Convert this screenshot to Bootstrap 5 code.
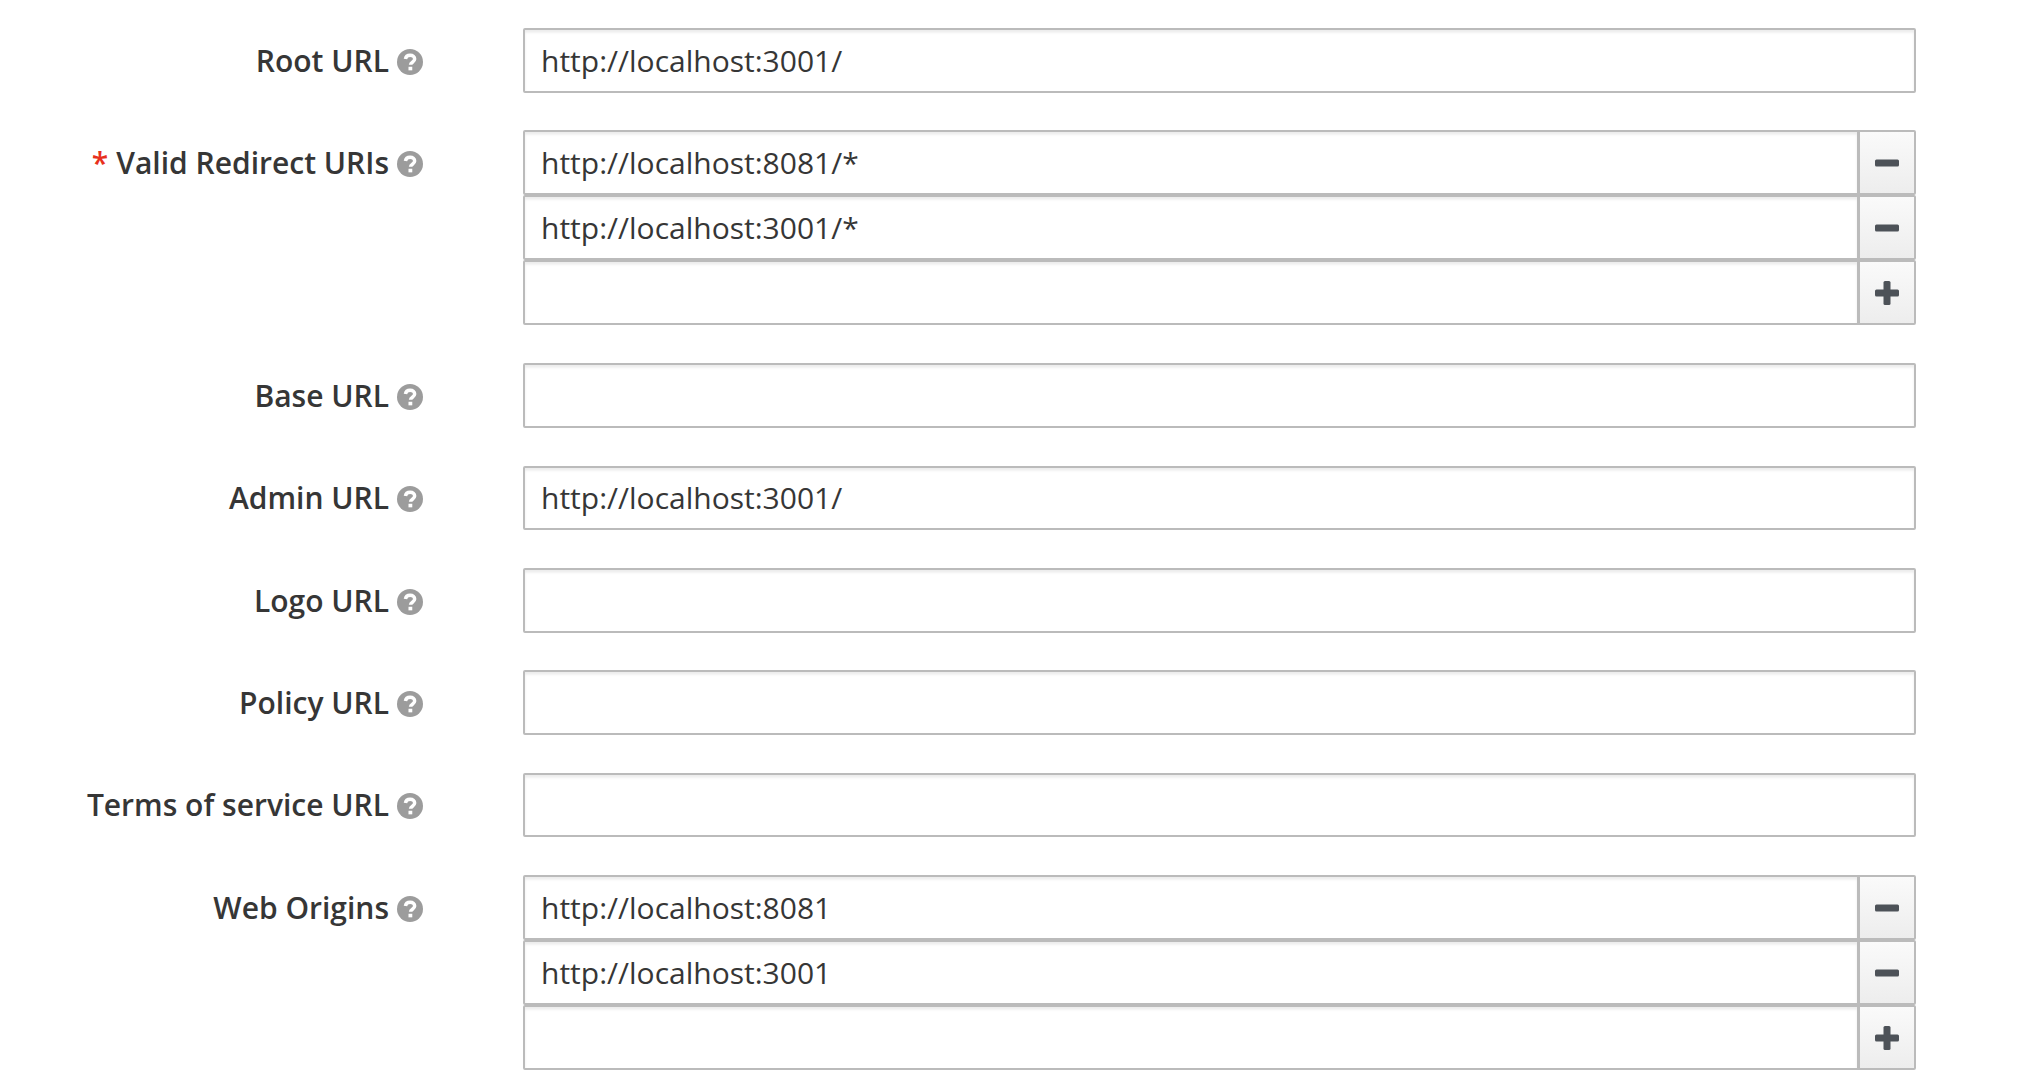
<!DOCTYPE html>
<html lang="en">
<head>
  <meta charset="UTF-8" />
  <title>Client Settings</title>
  <link href="https://cdn.jsdelivr.net/npm/bootstrap@5.3.0/dist/css/bootstrap.min.css" rel="stylesheet" />
  <style>
    body { font-family: "Open Sans", sans-serif; color: #363636; background: #fff; }
    .settings-form { padding: 28px 102px 0 0; }
    .field-row { margin-bottom: 37.9px; }
    .field-label { width: 423px; flex: none; padding-top: 12.5px; font-size: 30px; font-weight: 600; line-height: 40px; margin: 0; gap: 8px; }
    .required-mark { color: #e8301c; margin-right: 8px; }
    .help-icon { width: 26px; height: 26px; flex: none; margin-top: 8px; }
    .field-body { margin-left: 100px; flex: 1; }
    .url-input.form-control { height: 64.5px; padding: 0 16px; font-size: 30px; line-height: 40px; color: #363636; border: 2.5px solid #bbb; border-radius: 2px; box-shadow: inset 0 2.5px 2.5px rgba(3,3,3,.08); }
    .url-input.form-control:focus { border-color: #bbb; box-shadow: inset 0 2.5px 2.5px rgba(3,3,3,.08); }
    .input-group > .url-input.form-control { height: 65px; border-radius: 2px 0 0 2px; }
    .list-btn.btn { width: 58px; padding: 0; height: 65px; border: 2.5px solid #bbb; border-radius: 0 2px 2px 0; background: linear-gradient(#fafafa, #ededed); margin-left: -2.5px; display: flex; align-items: center; justify-content: center; }
    .list-btn svg { width: 24px; height: 24px; }
  </style>
</head>
<body>
  <svg class="d-none">
    <symbol id="help" viewBox="0 0 24 24">
      <circle cx="12" cy="12" r="12" fill="#9c9c9c" />
      <path d="M7.800 9.300c.3-2.200 2-3.500 4.300-3.500 2.500 0 4.200 1.400 4.200 3.500 0 3-3.800 2.700-3.800 5.300" fill="none" stroke="#fff" stroke-width="3.200" />
      <rect x="10.600" y="16.400" width="3.500" height="3.300" fill="#fff" />
    </symbol>
    <symbol id="minus" viewBox="0 0 24 24">
      <rect y="8.500" width="24" height="7" rx="1.500" fill="#4d5258" />
    </symbol>
    <symbol id="plus" viewBox="0 0 24 24">
      <rect y="8.500" width="24" height="7" rx="1.500" fill="#4d5258" />
      <rect x="8.500" width="7" height="24" rx="1.500" fill="#4d5258" />
    </symbol>
  </svg>

  <form class="settings-form">
    <div class="field-row d-flex">
      <label class="field-label d-flex justify-content-end align-items-start">
        <span>Root URL</span>
        <svg class="help-icon"><use href="#help" /></svg>
      </label>
      <div class="field-body">
        <input class="form-control url-input" value="http://localhost:3001/" />
      </div>
    </div>

    <div class="field-row d-flex">
      <label class="field-label d-flex justify-content-end align-items-start">
        <span><span class="required-mark">*</span>Valid Redirect URIs</span>
        <svg class="help-icon"><use href="#help" /></svg>
      </label>
      <div class="field-body">
        <div class="input-group">
          <input class="form-control url-input" value="http://localhost:8081/*" />
          <button type="button" class="btn list-btn" aria-label="Remove"><svg><use href="#minus" /></svg></button>
        </div>
        <div class="input-group">
          <input class="form-control url-input" value="http://localhost:3001/*" />
          <button type="button" class="btn list-btn" aria-label="Remove"><svg><use href="#minus" /></svg></button>
        </div>
        <div class="input-group">
          <input class="form-control url-input" />
          <button type="button" class="btn list-btn" aria-label="Add"><svg><use href="#plus" /></svg></button>
        </div>
      </div>
    </div>

    <div class="field-row d-flex">
      <label class="field-label d-flex justify-content-end align-items-start">
        <span>Base URL</span>
        <svg class="help-icon"><use href="#help" /></svg>
      </label>
      <div class="field-body">
        <input class="form-control url-input" />
      </div>
    </div>

    <div class="field-row d-flex">
      <label class="field-label d-flex justify-content-end align-items-start">
        <span>Admin URL</span>
        <svg class="help-icon"><use href="#help" /></svg>
      </label>
      <div class="field-body">
        <input class="form-control url-input" value="http://localhost:3001/" />
      </div>
    </div>

    <div class="field-row d-flex">
      <label class="field-label d-flex justify-content-end align-items-start">
        <span>Logo URL</span>
        <svg class="help-icon"><use href="#help" /></svg>
      </label>
      <div class="field-body">
        <input class="form-control url-input" />
      </div>
    </div>

    <div class="field-row d-flex">
      <label class="field-label d-flex justify-content-end align-items-start">
        <span>Policy URL</span>
        <svg class="help-icon"><use href="#help" /></svg>
      </label>
      <div class="field-body">
        <input class="form-control url-input" />
      </div>
    </div>

    <div class="field-row d-flex">
      <label class="field-label d-flex justify-content-end align-items-start">
        <span>Terms of service URL</span>
        <svg class="help-icon"><use href="#help" /></svg>
      </label>
      <div class="field-body">
        <input class="form-control url-input" />
      </div>
    </div>

    <div class="field-row d-flex">
      <label class="field-label d-flex justify-content-end align-items-start">
        <span>Web Origins</span>
        <svg class="help-icon"><use href="#help" /></svg>
      </label>
      <div class="field-body">
        <div class="input-group">
          <input class="form-control url-input" value="http://localhost:8081" />
          <button type="button" class="btn list-btn" aria-label="Remove"><svg><use href="#minus" /></svg></button>
        </div>
        <div class="input-group">
          <input class="form-control url-input" value="http://localhost:3001" />
          <button type="button" class="btn list-btn" aria-label="Remove"><svg><use href="#minus" /></svg></button>
        </div>
        <div class="input-group">
          <input class="form-control url-input" />
          <button type="button" class="btn list-btn" aria-label="Add"><svg><use href="#plus" /></svg></button>
        </div>
      </div>
    </div>
  </form>

  <script src="https://cdn.jsdelivr.net/npm/bootstrap@5.3.0/dist/js/bootstrap.bundle.min.js"></script>
</body>
</html>
